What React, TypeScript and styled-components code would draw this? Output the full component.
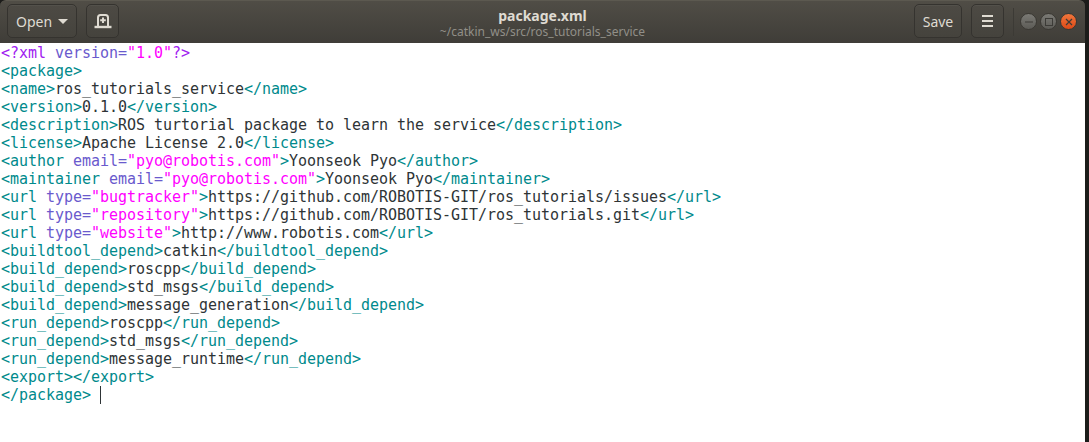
import React from 'react';
import styled, { createGlobalStyle } from 'styled-components';

type Kind = 'tag' | 'attr' | 'str' | 'pre' | 'text';
type Seg = [Kind, string];

const tag = (open: string, body: string) => [
  ['tag', `<${open}>`],
  ['text', body],
  ['tag', `</${open}>`],
] as Seg[];

const withAttr = (name: string, attr: string, value: string, body: string, close = name) => [
  ['tag', `<${name} `],
  ['attr', `${attr}=`],
  ['str', `"${value}"`],
  ['tag', '>'],
  ['text', body],
  ['tag', `</${close}>`],
] as Seg[];

const lines: Seg[][] = [
  [['pre', '<?xml '], ['attr', 'version='], ['str', '"1.0"'], ['pre', '?>']],
  [['tag', '<package>']],
  tag('name', 'ros_tutorials_service'),
  tag('version', '0.1.0'),
  tag('description', 'ROS turtorial package to learn the service'),
  tag('license', 'Apache License 2.0'),
  withAttr('author', 'email', 'pyo@robotis.com', 'Yoonseok Pyo'),
  withAttr('maintainer', 'email', 'pyo@robotis.com', 'Yoonseok Pyo'),
  withAttr('url', 'type', 'bugtracker', 'https://github.com/ROBOTIS-GIT/ros_tutorials/issues'),
  withAttr('url', 'type', 'repository', 'https://github.com/ROBOTIS-GIT/ros_tutorials.git'),
  withAttr('url', 'type', 'website', 'http://www.robotis.com'),
  tag('buildtool_depend', 'catkin'),
  tag('build_depend', 'roscpp'),
  tag('build_depend', 'std_msgs'),
  tag('build_depend', 'message_generation'),
  tag('run_depend', 'roscpp'),
  tag('run_depend', 'std_msgs'),
  tag('run_depend', 'message_runtime'),
  tag('export', ''),
];

const colors: Record<Kind, string> = {
  tag: '#008a8c',
  attr: '#6a5acd',
  str: '#ff00ff',
  pre: '#a020f0',
  text: '#2e3436',
};

const GlobalStyle = createGlobalStyle`
  html, body {
    margin: 0;
    padding: 0;
    background: #1c1c1a;
  }
`;

const Page = styled.div`
  width: 1089px;
  height: 442px;
  overflow: hidden;
  background: #1c1c1a;
`;

const Window = styled.div`
  width: 1085px;
  height: 442px;
  display: flex;
  flex-direction: column;
`;

const HeaderBar = styled.header`
  height: 43px;
  box-sizing: border-box;
  padding: 4px 7px 0 7px;
  display: grid;
  grid-template-columns: 1fr auto 1fr;
  align-items: start;
  background: linear-gradient(#504d46, #3f3d38);
  border-radius: 6px 6px 0 0;
  border-top: 1px solid #5c5950;
  font-family: 'Noto Sans', 'Open Sans', sans-serif;
`;

const Group = styled.div<{ $end?: boolean }>`
  display: flex;
  align-items: center;
  justify-content: ${(p) => (p.$end ? 'flex-end' : 'flex-start')};
`;

const ToolButton = styled.div<{ $width: number; $gap?: number }>`
  width: ${(p) => p.$width}px;
  height: 34px;
  margin-right: ${(p) => p.$gap ?? 0}px;
  margin-top: -1px;
  box-sizing: border-box;
  display: flex;
  align-items: center;
  justify-content: center;
  gap: 6px;
  border: 1px solid #35332f;
  border-radius: 5px;
  background: linear-gradient(#4d4a44, #45433d);
  box-shadow: inset 0 1px 0 rgba(255, 255, 255, 0.04);
  color: #dfdbd2;
  font-size: 14px;
`;

const Separator = styled.div`
  width: 1px;
  height: 28px;
  margin: 0 3px 0 9px;
  background: #3c3a35;
`;

const WindowButton = styled.div<{ $close?: boolean }>`
  width: 17px;
  height: 17px;
  box-sizing: border-box;
  margin-left: 3px;
  border-radius: 50%;
  display: flex;
  align-items: center;
  justify-content: center;
  border: 1px solid #3a3833;
  background: ${(p) =>
    p.$close ? 'linear-gradient(#f0763c, #dd4a17)' : 'linear-gradient(#7b7a75, #5c5b56)'};

  &:last-child {
    margin-right: 1px;
  }
`;

const TitleBox = styled.div`
  display: flex;
  flex-direction: column;
  align-items: center;
  padding-top: 2px;
`;

const Title = styled.div`
  color: #dfdbd2;
  font-size: 14px;
  font-weight: 700;
  line-height: 17px;
`;

const Subtitle = styled.div`
  color: #918f88;
  font-size: 12px;
  line-height: 15px;
`;

const Editor = styled.main`
  flex: 1;
  background: #ffffff;
  padding: 1px 0 0 1px;
  font-family: 'DejaVu Sans Mono', monospace;
  font-size: 15px;
  letter-spacing: -0.03px;
`;

const Line = styled.div`
  height: 18px;
  line-height: 18px;
  white-space: pre;
  color: #2e3436;
`;

const Seg = styled.span<{ $kind: Kind }>`
  color: ${(p) => colors[p.$kind]};
`;

const Caret = styled.span`
  display: inline-block;
  width: 1px;
  height: 18px;
  margin-left: 0;
  vertical-align: top;
  background: #2e3436;
`;

const NewTabIcon = () => (
  <svg width="18" height="15" viewBox="0 0 18 15" fill="none" stroke="#dfdbd2" strokeWidth="2">
    <path d="M4 12V3.5C4 2 5 1 6.5 1h5C13 1 14 2 14 3.5V12" />
    <path d="M0.5 13h17" strokeWidth="2.4" />
    <path d="M9 3.5v5.5M6.2 6.2h5.6" />
  </svg>
);

const ArrowIcon = () => (
  <svg width="10" height="5" viewBox="0 0 10 5">
    <path d="M0 0h10L5 5z" fill="#dfdbd2" />
  </svg>
);

const MenuIcon = () => (
  <svg width="11" height="12" viewBox="0 0 11 12" fill="#dfdbd2">
    <rect width="11" height="2" y="0" />
    <rect width="11" height="2" y="5" />
    <rect width="11" height="2" y="10" />
  </svg>
);

const App: React.FC = () => (
  <Page>
    <GlobalStyle />
    <Window>
      <HeaderBar>
        <Group>
          <ToolButton $width={70} $gap={9}>
            Open
            <ArrowIcon />
          </ToolButton>
          <ToolButton $width={33}>
            <NewTabIcon />
          </ToolButton>
        </Group>
        <TitleBox>
          <Title>package.xml</Title>
          <Subtitle>~/catkin_ws/src/ros_tutorials_service</Subtitle>
        </TitleBox>
        <Group $end>
          <ToolButton $width={48} $gap={9}>
            Save
          </ToolButton>
          <ToolButton $width={33}>
            <MenuIcon />
          </ToolButton>
          <Separator />
          <WindowButton>
            <svg width="10" height="10" viewBox="0 0 10 10" stroke="#3c3b37" strokeWidth="1">
              <path d="M1 5h8" />
            </svg>
          </WindowButton>
          <WindowButton>
            <svg width="10" height="10" viewBox="0 0 10 10" fill="none" stroke="#3c3b37" strokeWidth="1">
              <rect x="1.5" y="1.5" width="7" height="7" />
            </svg>
          </WindowButton>
          <WindowButton $close>
            <svg width="10" height="10" viewBox="0 0 10 10" stroke="#3c3b37" strokeWidth="1.2">
              <path d="M2 2l6 6M8 2l-6 6" />
            </svg>
          </WindowButton>
        </Group>
      </HeaderBar>
      <Editor>
        {lines.map((segs, i) => (
          <Line key={i}>
            {segs.map(([kind, text], j) => (
              <Seg key={j} $kind={kind}>
                {text}
              </Seg>
            ))}
          </Line>
        ))}
        <Line>
          <Seg $kind="tag">{'</package>'}</Seg> <Caret />
        </Line>
      </Editor>
    </Window>
  </Page>
);

export default App;
